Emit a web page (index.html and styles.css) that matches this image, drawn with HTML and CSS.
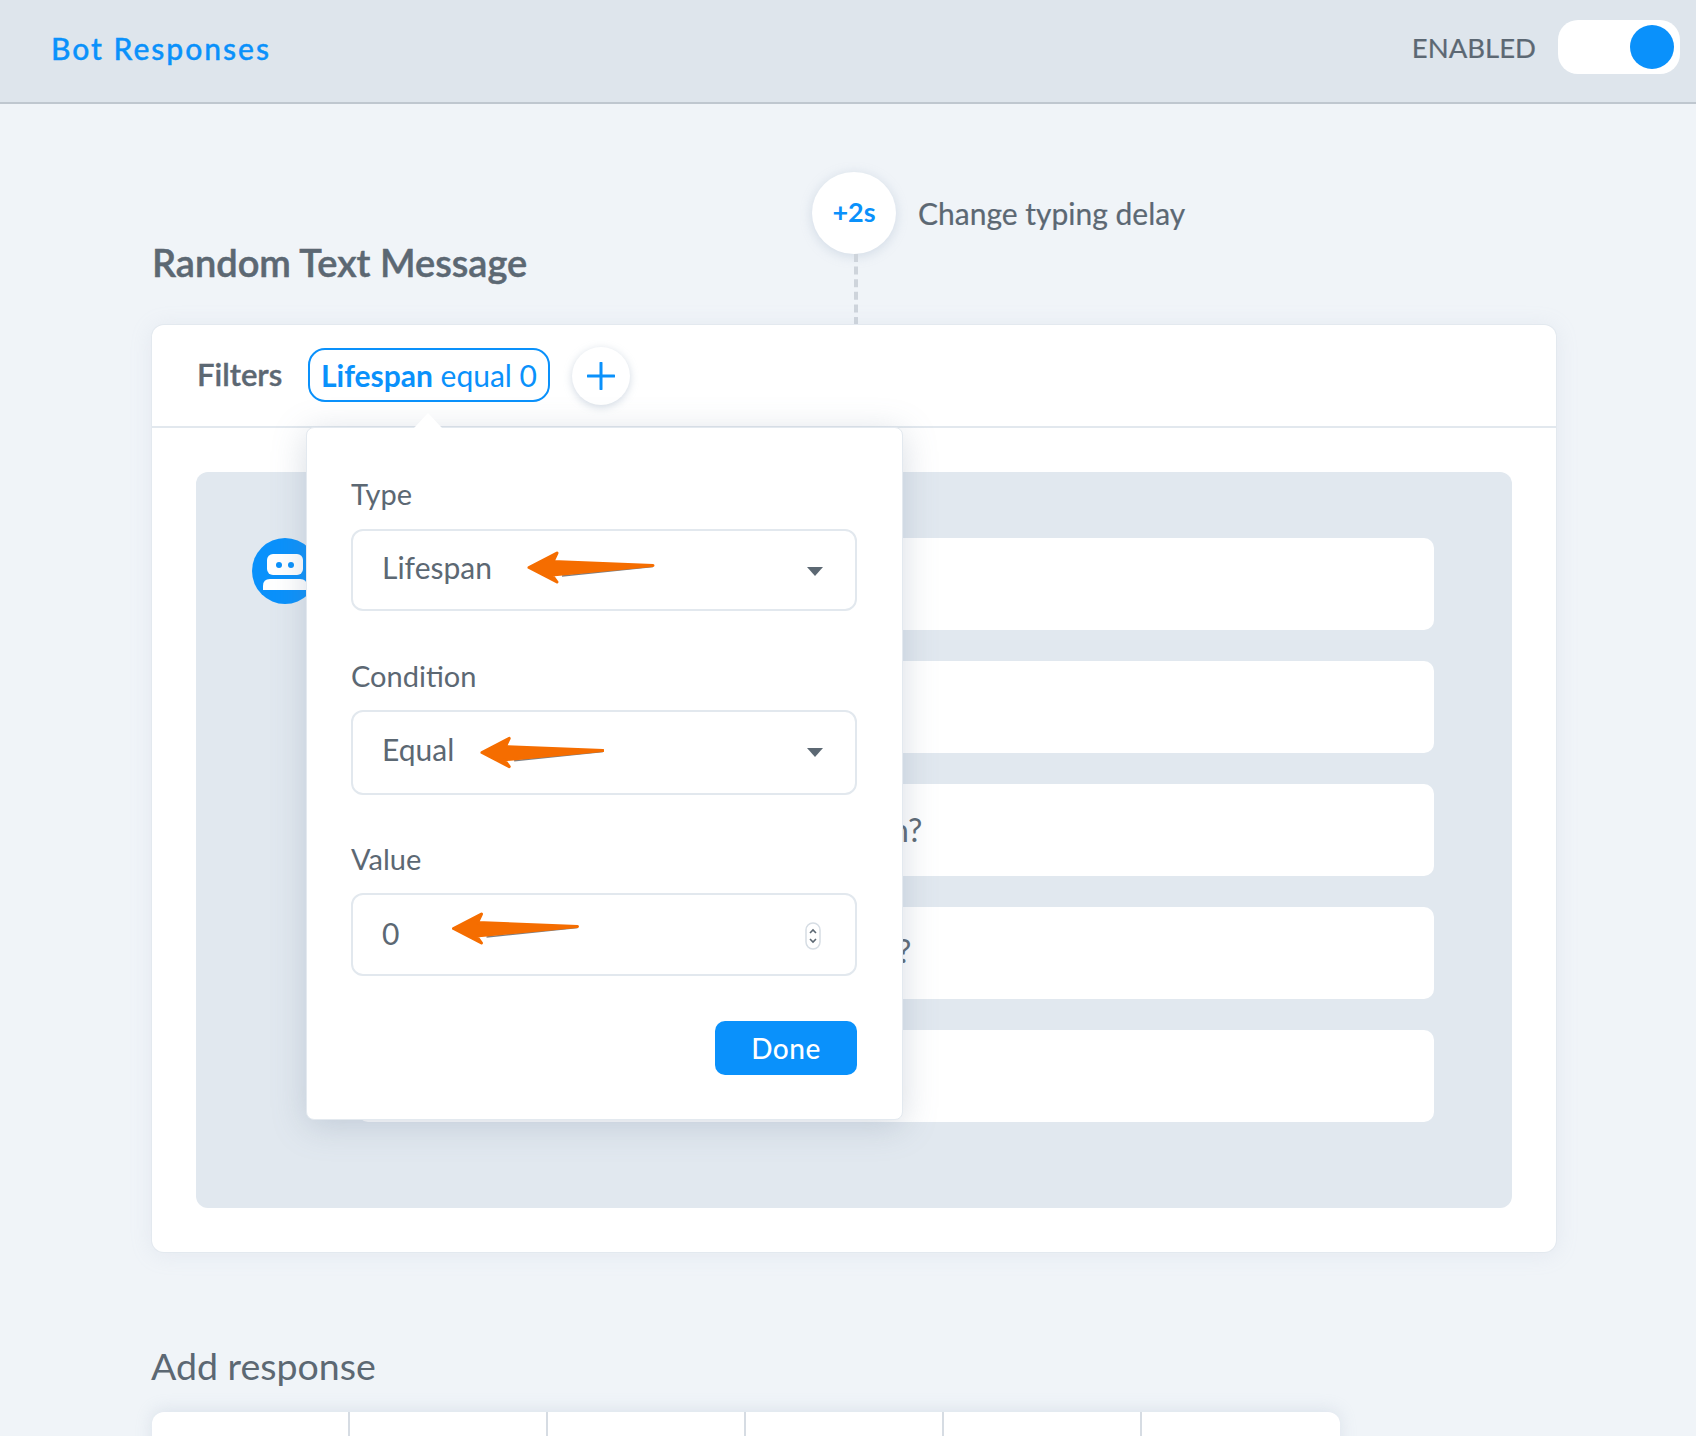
FILE: index.html
```html
<!DOCTYPE html>
<html lang="en">
<head>
<meta charset="utf-8">
<title>Bot Responses</title>
<link rel="stylesheet" href="styles.css">
</head>
<body>
<header class="topbar">
  <div class="topbar-title">Bot Responses</div>
  <div class="topbar-status">
    <span class="status-label">ENABLED</span>
    <span class="toggle"><span class="toggle-knob"></span></span>
  </div>
</header>
<main class="page">
  <section class="block-head">
    <h2 class="block-title">Random Text Message</h2>
    <div class="delay">
      <div class="delay-stem">
        <div class="delay-circle">+2s</div>
        <div class="delay-line"></div>
      </div>
      <div class="delay-label">Change typing delay</div>
    </div>
  </section>
  <section class="card">
    <div class="filters">
      <span class="filters-label">Filters</span>
      <span class="chip"><b class="chip-key">Lifespan</b> equal 0</span>
      <span class="add-filter">
        <svg class="plus" viewBox="0 0 28 28" width="28" height="28"><path d="M14 1v26M1 14h26"/></svg>
      </span>
    </div>
    <div class="card-body">
      <div class="panel">
        <div class="avatar">
          <svg viewBox="0 0 66 66" width="66" height="66">
            <rect class="bot-white" x="15" y="16" width="36" height="21" rx="6"/>
            <circle class="bot-eye" cx="27" cy="27" r="3"/>
            <circle class="bot-eye" cx="39" cy="27" r="3"/>
            <path class="bot-white" d="M11 52v-4q0-7 7-7h30q7 0 7 7v4z"/>
          </svg>
        </div>
        <div class="messages">
          <div class="message"></div>
          <div class="message"></div>
          <div class="message message-a">n?</div>
          <div class="message message-b">?</div>
          <div class="message"></div>
        </div>
      </div>
    </div>
    <div class="popover">
      <div class="popover-tip"></div>
      <div class="form-label form-label-first">Type</div>
      <div class="field field-first">
        <span>Lifespan</span>
        <span class="caret"></span>
        <svg class="arrow arrow-type" viewBox="0 0 128 34"><path class="arrow-edge" d="M36 25L127 15.5"/><path class="arrow-fill" d="M3 16.500L31 2L27 10.500L127 14.500L26 24L31 31z"/></svg>
      </div>
      <div class="form-label form-label-next">Condition</div>
      <div class="field field-second">
        <span>Equal</span>
        <span class="caret"></span>
        <svg class="arrow arrow-cond" viewBox="0 0 128 34"><path class="arrow-edge" d="M36 25L127 15.5"/><path class="arrow-fill" d="M3 16.500L31 2L27 10.500L127 14.500L26 24L31 31z"/></svg>
      </div>
      <div class="form-label form-label-last">Value</div>
      <div class="field field-number">
        <span>0</span>
        <svg class="spinner" viewBox="0 0 16 28" width="16" height="28">
          <rect class="spinner-pill" x="1" y="1" width="14" height="26" rx="7"/>
          <path class="spinner-chev" d="M5 11l3-3 3 3M5 17l3 3 3-3"/>
        </svg>
        <svg class="arrow arrow-value" viewBox="0 0 128 34"><path class="arrow-edge" d="M36 25L127 15.5"/><path class="arrow-fill" d="M3 16.500L31 2L27 10.500L127 14.500L26 24L31 31z"/></svg>
      </div>
      <div class="form-actions"><span class="done">Done</span></div>
    </div>
  </section>
  <h3 class="add-title">Add response</h3>
  <div class="add-bar">
    <div class="add-cell"></div>
    <div class="add-cell"></div>
    <div class="add-cell"></div>
    <div class="add-cell"></div>
    <div class="add-cell"></div>
    <div class="add-cell"></div>
  </div>
</main>
</body>
</html>
```
FILE: styles.css
```css
* { box-sizing: border-box; }
html, body { margin: 0; padding: 0; }
body {
  height: 1436px;
  overflow: hidden;
  background: #f0f4f8;
  color: #5c6873;
  font-family: "Lato", "Noto Sans", sans-serif;
}
.topbar {
  height: 104px;
  background: #dee5ec;
  border-bottom: 2px solid #bfc7cf;
  display: flex;
  align-items: center;
  justify-content: space-between;
  padding: 0 16px 0 51px;
}
.topbar-title {
  color: #0a91fb;
  font-size: 30px;
  font-weight: 500;
  letter-spacing: 2px;
  margin-top: -6px;
  -webkit-text-stroke: 0.4px #0a91fb;
}
.topbar-status { display: flex; align-items: center; gap: 22px; margin-top: -8px; }
.status-label { font-size: 27.500px; -webkit-text-stroke: 0.2px #5c6873; }
.toggle {
  width: 122px;
  height: 54px;
  border-radius: 20px;
  background: #fff;
  display: flex;
  align-items: center;
  justify-content: flex-end;
  padding-right: 6px;
}
.toggle-knob { width: 44px; height: 44px; border-radius: 50%; background: #0a91fb; }
.page { padding: 0 140px 0 152px; }
.block-head {
  display: grid;
  grid-template-columns: 660px 1fr;
  padding-top: 68px;
  height: 221px;
}
.block-title {
  margin: 62px 0 0;
  font-size: 38px;
  line-height: 56px;
  font-weight: 600;
  white-space: nowrap;
  -webkit-text-stroke: 0.5px #5c6873;
}
.delay { display: flex; align-items: flex-start; gap: 22px; }
.delay-stem { width: 84px; display: flex; flex-direction: column; align-items: center; }
.delay-circle {
  width: 84px;
  height: 82px;
  border-radius: 50%;
  background: #fff;
  box-shadow: 0 2px 12px rgba(150, 170, 195, 0.35);
  color: #0a91fb;
  font-size: 27px;
  font-weight: 700;
  padding-bottom: 4px;
  display: flex;
  align-items: center;
  justify-content: center;
}
.delay-line {
  margin-left: 3px;
  height: 71px;
  border-left: 4px dashed #ced4db;
}
.delay-label { font-size: 30px; line-height: 82px; -webkit-text-stroke: 0.2px #5c6873; }
.card {
  position: relative;
  background: #fff;
  border-radius: 12px;
  box-shadow: 0 0 0 1px #e3e9ef, 0 2px 22px rgba(170, 185, 205, 0.18);
  height: 927px;
}
.filters {
  height: 103px;
  border-bottom: 2px solid #e2e8ee;
  display: flex;
  align-items: center;
  padding-left: 45px;
  padding-bottom: 2px;
}
.filters-label {
  font-size: 31px;
  font-weight: 600;
  width: 111px;
  margin-top: -2px;
  -webkit-text-stroke: 0.4px #5c6873;
}
.chip {
  width: 242px;
  height: 54px;
  border: 2px solid #0a91fb;
  border-radius: 17px;
  color: #0a91fb;
  font-size: 30px;
  line-height: 50px;
  text-align: center;
  white-space: nowrap;
}
.chip-key { font-weight: 700; }
.add-filter {
  width: 58px;
  height: 58px;
  margin-left: 22px;
  margin-top: 2px;
  border-radius: 50%;
  background: #fff;
  box-shadow: 0 2px 8px rgba(140, 160, 185, 0.4);
  display: flex;
  align-items: center;
  justify-content: center;
}
.plus { fill: none; stroke: #0a91fb; stroke-width: 3; stroke-linecap: round; }
.card-body { padding: 44px; }
.panel {
  height: 736px;
  background: #e1e8ef;
  border-radius: 12px;
  padding: 66px 78px 0 56px;
  display: flex;
  gap: 40px;
}
.avatar {
  width: 66px;
  height: 66px;
  border-radius: 50%;
  background: #0a91fb;
  flex: none;
}
.bot-white { fill: #fff; }
.bot-eye { fill: #0a91fb; }
.messages { flex: 1; display: flex; flex-direction: column; gap: 31px; }
.message {
  height: 92px;
  background: #fff;
  border-radius: 10px;
  font-size: 32px;
  line-height: 92px;
  white-space: nowrap;
}
.message-a { padding-left: 533px; }
.message-b { padding-left: 539px; line-height: 88px; }
.popover {
  position: absolute;
  left: 154px;
  top: 102px;
  width: 597px;
  height: 693px;
  background: #fff;
  border: 1px solid #e3e9ef;
  border-radius: 8px;
  box-shadow: 0 6px 34px rgba(110, 130, 155, 0.28);
  padding: 49px 45px 0 44px;
}
.popover-tip {
  position: absolute;
  left: 107px;
  top: -15px;
  width: 0;
  height: 0;
  border-left: 14px solid transparent;
  border-right: 14px solid transparent;
  border-bottom: 15px solid #fff;
}
.form-label { font-size: 29px; line-height: 34px; margin-bottom: 17px; }
.form-label-first { margin-bottom: 18px; }
.form-label-next { margin-top: 48px; }
.form-label-last { margin-top: 47px; }
.field {
  position: relative;
  height: 83px;
  border: 2px solid #e2e8ee;
  border-radius: 12px;
  padding-left: 29px;
  padding-bottom: 6px;
  font-size: 30px;
  display: flex;
  align-items: center;
  justify-content: space-between;
  padding-right: 32px;
}
.field-first { height: 82px; }
.field-second { height: 85px; padding-bottom: 8px; }
.field-number { padding-right: 34px; padding-bottom: 3px; }
.caret {
  width: 0;
  height: 0;
  border-left: 8px solid transparent;
  border-right: 8px solid transparent;
  border-top: 9px solid #5c6873;
  margin-top: 8px;
}
.spinner { margin-top: 6px; fill: none; }
.spinner-pill { stroke: #d6dde4; stroke-width: 1.5; }
.spinner-chev { stroke: #5c6873; stroke-width: 1.6; }
.arrow { position: absolute; width: 128px; height: 34px; }
.arrow-type { left: 172px; top: 20px; width: 130px; }
.arrow-cond { left: 126px; top: 24px; width: 125px; }
.arrow-value { left: 92px; top: 17px; width: 139px; }
.arrow-fill { fill: #f56d00; stroke: #f56d00; stroke-width: 3; stroke-linejoin: round; }
.arrow-edge { stroke: #7a7f85; stroke-width: 1.500; fill: none; }
.form-actions { display: flex; justify-content: flex-end; margin-top: 45px; }
.done {
  width: 142px;
  height: 54px;
  border-radius: 10px;
  background: #0a91fb;
  color: #fff;
  font-size: 28px;
  line-height: 54px;
  text-align: center;
  font-weight: 500;
  letter-spacing: 0.500px;
}
.add-title {
  margin: 92px 0 24px -1px;
  font-size: 37.500px;
  line-height: 44px;
  font-weight: 400;
}
.add-bar {
  width: 1188px;
  height: 60px;
  background: #fff;
  border-radius: 12px 12px 0 0;
  display: grid;
  grid-template-columns: repeat(6, 198px);
  box-shadow: 0 -2px 16px rgba(170, 185, 205, 0.3);
}
.add-cell { border-right: 2px solid #d6dce3; }
.add-cell:last-child { border-right: 0; }
```
